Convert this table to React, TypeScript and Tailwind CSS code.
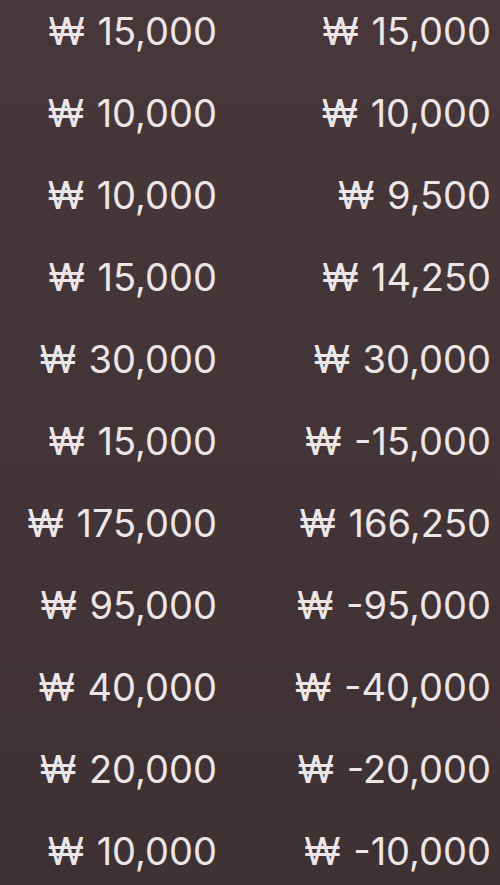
const rows: [string, string][] = [
  ['15,000', '15,000'],
  ['10,000', '10,000'],
  ['10,000', '9,500'],
  ['15,000', '14,250'],
  ['30,000', '30,000'],
  ['15,000', '-15,000'],
  ['175,000', '166,250'],
  ['95,000', '-95,000'],
  ['40,000', '-40,000'],
  ['20,000', '-20,000'],
  ['10,000', '-10,000'],
]

function Amount({ value }: { value: string }) {
  return (
    <span className="whitespace-nowrap text-right text-[38px] leading-[40px] text-[#ece6e6]">
      <span className="mr-[2px]">₩</span> {value}
    </span>
  )
}

export default function App() {
  return (
    <div
      className="h-[885px] w-[500px] overflow-hidden bg-gradient-to-b from-[#47373b] to-[#3e3134]"
      style={{ fontFamily: 'Inter, "Noto Sans", sans-serif' }}
    >
      <div className="grid grid-cols-[217px_1fr] gap-y-[42px] pr-[9px] pt-[11px]">
        {rows.map(([a, b], i) => (
          <div key={i} className="contents">
            <Amount value={a} />
            <Amount value={b} />
          </div>
        ))}
      </div>
    </div>
  )
}
